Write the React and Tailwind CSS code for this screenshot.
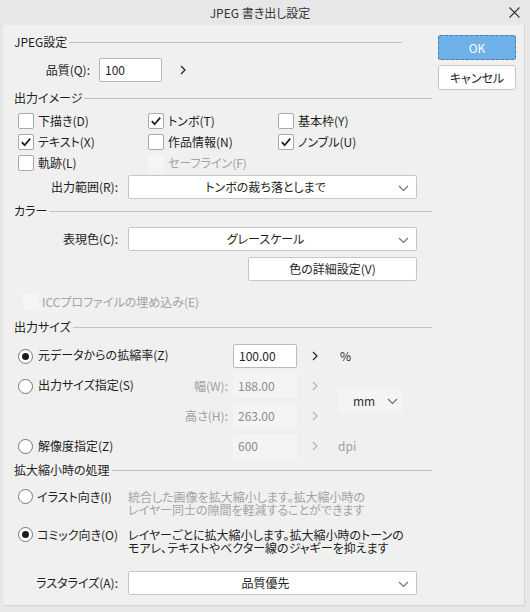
import React from 'react';

const Chev = ({ off }) => (
  <svg width="6" height="10" viewBox="0 0 6 10" className="block">
    <path d="M1 1 L5 5 L1 9" fill="none" stroke={off ? '#b4b4b4' : '#222'} strokeWidth="1.2" />
  </svg>
);

const Down = () => (
  <svg width="11" height="7" viewBox="0 0 11 7" className="block">
    <path d="M1 1 L5.5 5.5 L10 1" fill="none" stroke="#6f6f6f" strokeWidth="1.1" />
  </svg>
);

function Header({ title, short }) {
  return (
    <div className={`flex items-center h-4 ${short ? 'mr-[30px]' : ''}`}>
      <span className="leading-none">{title}</span>
      <div className="flex-1 h-px bg-[#c2c2c2] ml-[2px]" />
    </div>
  );
}

function Check({ on, off, label }) {
  return (
    <div className="flex items-center h-[21px]">
      <div
        className={`w-4 h-4 rounded-[2px] flex items-center justify-center ${
          off ? 'bg-[#f5f5f5]' : 'bg-white border border-[#a9a9a9]'
        }`}
      >
        {on && (
          <svg width="12" height="12" viewBox="0 0 12 12">
            <path d="M1.8 6.2 L4.6 9.2 L10.2 2.6" fill="none" stroke="#1c1c1c" strokeWidth="1.7" />
          </svg>
        )}
      </div>
      <span className={`ml-[4px] ${off ? 'text-[#a3a3a3]' : ''}`}>{label}</span>
    </div>
  );
}

function Radio({ on }) {
  return (
    <div className="w-[15px] h-[15px] shrink-0 rounded-full bg-white border border-[#777] flex items-center justify-center">
      {on && <div className="w-[7px] h-[7px] rounded-full bg-[#1c1c1c]" />}
    </div>
  );
}

function SelectRow({ label, value, className = '' }) {
  return (
    <div className={`flex items-center h-6 ${className}`}>
      <div className="w-[104px] text-right">{label}</div>
      <div className="ml-[10px] w-[289px] h-6 bg-white border border-[#c6c6c6] rounded-[2px] flex items-center relative">
        <span className="flex-1 text-center pr-[14px]">{value}</span>
        <div className="absolute right-[7px] top-[9px]">
          <Down />
        </div>
      </div>
    </div>
  );
}

function NumBox({ value, off }) {
  return (
    <div
      className={`w-16 h-6 flex items-center pl-[5px] ${
        off ? 'bg-[#f4f4f4] text-[#8c8c8c]' : 'bg-white border border-[#b9b9b9] rounded-[2px]'
      }`}
    >
      {value}
    </div>
  );
}

export default function App() {
  return (
    <div className="w-[530px] h-[612px] bg-[#e7e7e7] overflow-hidden text-[12px] text-[#1e1e1e] font-['Noto_Sans_CJK_JP','Liberation_Sans',sans-serif] [font-feature-settings:'palt']">
      {/* タイトルバー */}
      <div className="h-[25px] flex items-center">
        <div className="flex-1" />
        <span className="text-[#333] pt-[1px]">JPEG 書き出し設定</span>
        <div className="flex-1 flex justify-end pr-[10px]">
          <svg width="11" height="11" viewBox="0 0 11 11">
            <path d="M0.5 0.5 L10.5 10.5 M10.5 0.5 L0.5 10.5" stroke="#333" strokeWidth="1.1" />
          </svg>
        </div>
      </div>

      <div className="ml-[3px] w-[522px] h-[581px] bg-[#f0f0f0] border-r border-b border-[#d4d4d4] flex">
        {/* 左側 */}
        <div className="w-[429px] pl-[11px] pt-[9px]">
          <Header title="JPEG設定" short />
          <div className="flex items-center h-6 mt-[8px]">
            <div className="w-[76px] text-right">品質(Q):</div>
            <div className="ml-[9px] w-[63px] h-6 bg-white border border-[#b9b9b9] rounded-[2px] flex items-center pl-[5px]">
              100
            </div>
            <div className="ml-[18px]">
              <Chev />
            </div>
          </div>

          <div className="mt-[8px]">
            <Header title="出力イメージ" />
          </div>
          <div className="mt-[4px] pl-[4px] grid grid-cols-[130px_130px_130px]">
            <Check label="下描き(D)" />
            <Check on label="トンボ(T)" />
            <Check label="基本枠(Y)" />
            <Check on label="テキスト(X)" />
            <Check label="作品情報(N)" />
            <Check on label="ノンブル(U)" />
            <Check label="軌跡(L)" />
            <Check off label="セーフライン(F)" />
          </div>
          <SelectRow label="出力範囲(R):" value="トンボの裁ち落としまで" className="mt-[2px]" />

          <div className="mt-[4px]">
            <Header title="カラー" />
          </div>
          <SelectRow label="表現色(C):" value="グレースケール" className="mt-[8px]" />
          <div className="mt-[6px] flex">
            <div className="ml-[234px] w-[169px] h-6 bg-white border border-[#c6c6c6] rounded-[2px] flex items-center justify-center">
              色の詳細設定(V)
            </div>
          </div>
          <div className="mt-[13px] pl-[9px] flex items-center h-4">
            <div className="w-4 h-4 rounded-[2px] bg-[#f5f5f5]" />
            <span className="ml-[3px] text-[#a3a3a3]">ICCプロファイルの埋め込み(E)</span>
          </div>

          <div className="mt-[9px]">
            <Header title="出力サイズ" />
          </div>
          <div className="mt-[9px] pl-[4px] grid grid-cols-[150px_65px_64px_41px_64px] grid-rows-[24px_24px_24px_24px] gap-y-[6px] items-center">
            <div className="col-span-2 flex items-center">
              <Radio on />
              <span className="ml-[5px] -mt-[3px]">元データからの拡縮率(Z)</span>
            </div>
            <NumBox value="100.00" />
            <div className="pl-[15px]">
              <Chev />
            </div>
            <div className="pl-[2px]">%</div>

            <div className="flex items-center">
              <Radio />
              <span className="ml-[5px] -mt-[3px]">出力サイズ指定(S)</span>
            </div>
            <div className="text-right pr-[5px] text-[#a0a0a0]">幅(W):</div>
            <NumBox value="188.00" off />
            <div className="pl-[15px]">
              <Chev off />
            </div>
            <div className="row-span-2 h-6 bg-[#f4f4f4] flex items-center justify-between pl-[15px] pr-[4px]">
              <span className="text-[#333]">mm</span>
              <Down />
            </div>

            <div />
            <div className="text-right pr-[5px] text-[#a0a0a0]">高さ(H):</div>
            <NumBox value="263.00" off />
            <div className="pl-[15px]">
              <Chev off />
            </div>

            <div className="col-span-2 flex items-center">
              <Radio />
              <span className="ml-[5px]">解像度指定(Z)</span>
            </div>
            <NumBox value="600" off />
            <div className="pl-[15px]">
              <Chev off />
            </div>
            <div className="text-[#a0a0a0]">dpi</div>
          </div>

          <div className="mt-[4px]">
            <Header title="拡大縮小時の処理" />
          </div>
          <div className="mt-[12px] pl-[4px] flex">
            <div className="w-[110px] h-[13px] flex items-center">
              <Radio />
              <span className="ml-[4px]">イラスト向き(I)</span>
            </div>
            <div className="leading-[13px] text-[#a3a3a3]">
              統合した画像を拡大縮小します。拡大縮小時の
              <br />
              レイヤー同士の隙間を軽減することができます
            </div>
          </div>
          <div className="mt-[12px] pl-[4px] flex">
            <div className="w-[110px] h-[13px] flex items-center">
              <Radio on />
              <span className="ml-[4px]">コミック向き(O)</span>
            </div>
            <div className="leading-[13px]">
              レイヤーごとに拡大縮小します。拡大縮小時のトーンの
              <br />
              モアレ、テキストやベクター線のジャギーを抑えます
            </div>
          </div>
          <SelectRow label="ラスタライズ(A):" value="品質優先" className="mt-[17px]" />
        </div>

        {/* 右側のボタン */}
        <div className="ml-[6px] w-[78px] pt-[10px] flex flex-col">
          <div className="h-[25px] bg-[#6db1e8] border border-dashed border-[#50799c] rounded-[2px] flex items-center justify-center text-white">
            OK
          </div>
          <div className="mt-[5px] h-[25px] bg-white border border-[#c6c6c6] rounded-[3px] flex items-center justify-center">
            キャンセル
          </div>
        </div>
      </div>
    </div>
  );
}
